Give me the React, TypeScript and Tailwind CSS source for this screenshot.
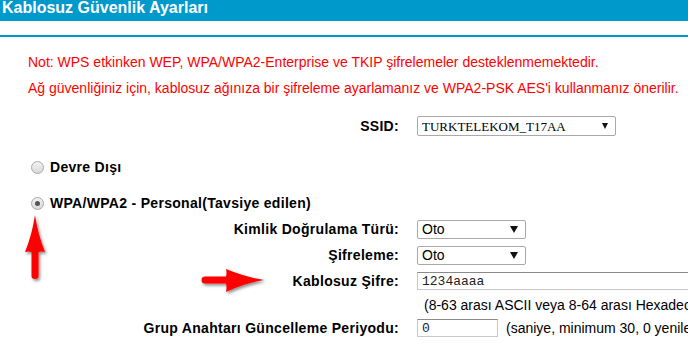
import React from "react";

const ar = { fontFamily: '"Liberation Sans", Arial, sans-serif' };
const serif = { fontFamily: '"Liberation Serif", "Times New Roman", serif' };
const mono = { fontFamily: '"Liberation Mono", "Courier New", monospace' };

function Tri({ small }: { small?: boolean }) {
  return small ? (
    <svg width="6" height="6" viewBox="0 0 6 6" className="shrink-0">
      <path d="M0 0 L6 0 L3 6 Z" fill="#111" />
    </svg>
  ) : (
    <svg width="8" height="7" viewBox="0 0 8 7" className="shrink-0">
      <path d="M0 0 L8 0 L4 7 Z" fill="#111" />
    </svg>
  );
}

function Radio({ checked }: { checked?: boolean }) {
  return (
    <div className="w-[13px] h-[13px] rounded-full border border-[#a8a8a8] bg-gradient-to-b from-[#f2f2f2] to-[#d9d9d9] flex items-center justify-center">
      {checked && <div className="w-[5px] h-[5px] rounded-full bg-[#555]" />}
    </div>
  );
}

function Label({ children }: { children: React.ReactNode }) {
  return (
    <div className="w-[399px] shrink-0 text-right font-bold text-[14px] tracking-[0.3px] text-black whitespace-nowrap" style={ar}>
      {children}
    </div>
  );
}

function Select({ w, text, font, size, fs, small }: { w: string; text: string; font: React.CSSProperties; size: string; fs: string; small?: boolean }) {
  return (
    <div className={`${w} ${size} flex items-center justify-between border border-[#a9a9a9] rounded-[2px] bg-white pl-[4px] pr-[7px]`}>
      <span className={`${fs} text-black leading-none`} style={font}>{text}</span>
      <Tri small={small} />
    </div>
  );
}

export default function App() {
  return (
    <div className="relative w-[688px] h-[352px] overflow-hidden bg-white" style={ar}>
      <div className="h-[21px] bg-[#0099cc] pl-[2px]">
        <div className="text-white font-bold text-[16px] leading-[16px]">Kablosuz Güvenlik Ayarları</div>
      </div>
      <div className="mt-[14px] h-[2px] bg-[#0099cc]" />
      <div className="mt-[12px] pl-[28px] text-[14px] text-[#ff0000] leading-[26px] whitespace-nowrap">
        <div>Not: WPS etkinken WEP, WPA/WPA2-Enterprise ve TKIP şifrelemeler desteklenmemektedir.</div>
        <div>Ağ güvenliğiniz için, kablosuz ağınıza bir şifreleme ayarlamanız ve WPA2-PSK AES&#39;i kullanmanız önerilir.</div>
      </div>
      <div className="mt-[12px] h-[26px] flex items-center">
        <Label>SSID:</Label>
        <div className="pl-[18px]">
          <Select w="w-[199px]" size="h-[20px]" fs="text-[13px]" text="TURKTELEKOM_T17AA" font={serif} small />
        </div>
      </div>
      <div className="mt-[15px] h-[26px] flex items-center pl-[31px] gap-[6px]">
        <Radio />
        <span className="font-bold text-[14px] tracking-[0.3px]">Devre Dışı</span>
      </div>
      <div className="mt-[11px] h-[25px] flex items-center pl-[31px] gap-[6px]">
        <Radio checked />
        <span className="font-bold text-[14px] tracking-[0.3px]">WPA/WPA2 - Personal(Tavsiye edilen)</span>
      </div>
      <div className="h-[26px] flex items-center">
        <Label>Kimlik Doğrulama Türü:</Label>
        <div className="pl-[18px]">
          <Select w="w-[109px]" size="h-[19px]" fs="text-[14px]" text="Oto" font={ar} />
        </div>
      </div>
      <div className="h-[26px] flex items-center">
        <Label>Şifreleme:</Label>
        <div className="pl-[18px]">
          <Select w="w-[109px]" size="h-[19px]" fs="text-[14px]" text="Oto" font={ar} />
        </div>
      </div>
      <div className="h-[26px] flex items-center">
        <Label>Kablosuz Şifre:</Label>
        <div className="pl-[18px]">
          <div className="w-[300px] h-[18px] border border-[#c8c8c8] border-t-[#8a8a8a] flex items-center pl-[4px]">
            <span className="text-[13px] leading-none text-[#222]" style={mono}>1234aaaa</span>
          </div>
        </div>
      </div>
      <div className="h-[22px] flex items-center pl-[424px] whitespace-nowrap text-[14px] text-black">
        (8-63 arası ASCII veya 8-64 arası Hexadecimal)
      </div>
      <div className="h-[24px] flex items-center whitespace-nowrap">
        <Label>Grup Anahtarı Güncelleme Periyodu:</Label>
        <div className="pl-[18px] flex items-center gap-[8px]">
          <div className="w-[81px] h-[18px] shrink-0 border border-[#c8c8c8] border-t-[#8a8a8a] flex items-center pl-[4px]">
            <span className="text-[13px] leading-none text-[#222]" style={mono}>0</span>
          </div>
          <span className="text-[14px] text-black">(saniye, minimum 30, 0 yenileme yok)</span>
        </div>
      </div>

      <svg className="absolute left-0 top-0 pointer-events-none" width="688" height="352">
        <defs>
          <filter id="sh" x="-50%" y="-50%" width="200%" height="200%">
            <feDropShadow dx="1.5" dy="2" stdDeviation="1.5" floodColor="#000" floodOpacity="0.45" />
          </filter>
        </defs>
        <path
          d="M35 215 Q38 235 45 252 Q41 251 38.5 252 L38.5 276 Q38.5 279 35 279 Q31.5 279 31.5 276 L31.5 252 Q29 251 25 252 Q32 235 35 215 Z"
          fill="#ff0000"
          filter="url(#sh)"
        />
        <path
          d="M264 280 Q245 283 226 292 Q227 287 226 283.5 L205 283.5 Q201.5 283.5 201.5 280 Q201.5 276.5 205 276.5 L226 276.5 Q227 273 226 269 Q245 277 264 280 Z"
          fill="#ff0000"
          filter="url(#sh)"
        />
      </svg>
    </div>
  );
}
